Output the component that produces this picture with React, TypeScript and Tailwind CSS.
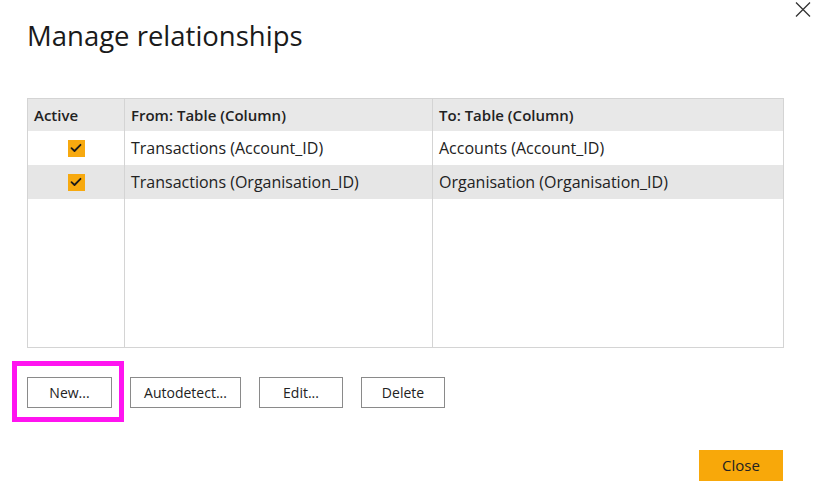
import React from "react";

const rows = [
  { from: "Transactions (Account_ID)", to: "Accounts (Account_ID)", bg: "bg-white" },
  { from: "Transactions (Organisation_ID)", to: "Organisation (Organisation_ID)", bg: "bg-[#e6e6e6]" },
];

function Check() {
  return (
    <span className="flex h-[17px] w-[17px] items-center justify-center bg-[#f7a90f]">
      <svg width="12" height="10" viewBox="0 0 12 10" fill="none">
        <path d="M1.5 5.2 L4.5 8 L10.5 1.8" stroke="#1a1a1a" strokeWidth="1.8" strokeLinecap="round" strokeLinejoin="round" />
      </svg>
    </span>
  );
}

function Btn({ children, w }: { children: React.ReactNode; w: string }) {
  return (
    <button className={`h-[31px] ${w} border border-[#8a8a8a] bg-white text-[14px] text-[#222]`}>{children}</button>
  );
}

export default function App() {
  return (
    <div className="relative flex h-[492px] w-[816px] flex-col bg-white text-[#222]" style={{ fontFamily: '"Open Sans", "Noto Sans", sans-serif' }}>
      <div className="flex items-start justify-between">
        <h1 className="pl-[27px] pt-[18px] text-[27.5px] leading-[36px] text-[#1a1a1a]">Manage relationships</h1>
        <svg className="mr-[5px] mt-[2px]" width="16" height="15" viewBox="0 0 16 15">
          <path d="M1 0.5 L15 14.5 M15 0.5 L1 14.5" stroke="#333" strokeWidth="1.3" />
        </svg>
      </div>

      <div className="ml-[27px] mt-[44px] flex h-[250px] w-[757px] flex-col border border-[#d4d4d4] text-[16px]">
        <div className="grid h-[32px] grid-cols-[97px_308px_1fr] bg-[#e8e8e8] text-[15px] font-semibold">
          <div className="flex items-center border-r border-[#d4d4d4] pl-[6px]">Active</div>
          <div className="flex items-center border-r border-[#d4d4d4] pl-[6px]">From: Table (Column)</div>
          <div className="flex items-center pl-[6px]">To: Table (Column)</div>
        </div>
        {rows.map((r, i) => (
          <div key={i} className={`grid h-[34px] grid-cols-[97px_308px_1fr] ${r.bg}`}>
            <div className="flex items-center justify-center border-r border-[#d4d4d4]">
              <Check />
            </div>
            <div className="flex items-center border-r border-[#d4d4d4] pl-[6px]">{r.from}</div>
            <div className="flex items-center pl-[6px]">{r.to}</div>
          </div>
        ))}
        <div className="grid flex-1 grid-cols-[97px_308px_1fr]">
          <div className="border-r border-[#d4d4d4]" />
          <div className="border-r border-[#d4d4d4]" />
          <div />
        </div>
      </div>

      <div className="relative ml-[27px] mt-[29px] flex gap-[18px]">
        <div className="pointer-events-none absolute left-[-15px] top-[-16px] h-[61px] w-[112px] border-[5px] border-[#ff14f0]" />
        <Btn w="w-[85px]">New...</Btn>
        <Btn w="w-[111px]">Autodetect...</Btn>
        <Btn w="w-[84px]">Edit...</Btn>
        <Btn w="w-[84px]">Delete</Btn>
      </div>

      <div className="mr-[33px] mt-[42px] flex justify-end">
        <button className="h-[31px] w-[84px] bg-[#f8a80a] text-[15px] text-[#222]">Close</button>
      </div>
    </div>
  );
}
